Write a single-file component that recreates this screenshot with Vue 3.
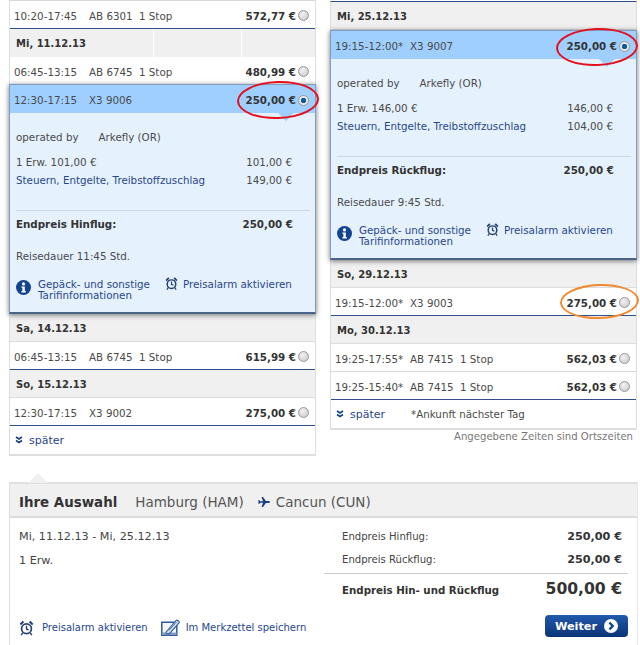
<script setup>
const outbound = [
  { type: 'flight', time: '10:20-17:45', no: 'AB 6301', stop: '1 Stop', price: '572,77 €', last: true },
  { type: 'day', label: 'Mi, 11.12.13', seams: true },
  { type: 'flight', time: '06:45-13:15', no: 'AB 6745', stop: '1 Stop', price: '480,99 €' },
  {
    type: 'detail', time: '12:30-17:15', no: 'X3 9006', price: '250,00 €', fare: '101,00 €', tax: '149,00 €',
    totalLabel: 'Endpreis Hinflug:', duration: 'Reisedauer 11:45 Std.'
  },
  { type: 'day', label: 'Sa, 14.12.13' },
  { type: 'flight', time: '06:45-13:15', no: 'AB 6745', stop: '1 Stop', price: '615,99 €', last: true },
  { type: 'day', label: 'So, 15.12.13' },
  { type: 'flight', time: '12:30-17:15', no: 'X3 9002', stop: '', price: '275,00 €', last: true }
]

const inbound = [
  { type: 'day', label: 'Mi, 25.12.13' },
  {
    type: 'detail', time: '19:15-12:00*', no: 'X3 9007', price: '250,00 €', fare: '146,00 €', tax: '104,00 €',
    totalLabel: 'Endpreis Rückflug:', duration: 'Reisedauer 9:45 Std.'
  },
  { type: 'day', label: 'So, 29.12.13' },
  { type: 'flight', time: '19:15-12:00*', no: 'X3 9003', stop: '', price: '275,00 €', last: true },
  { type: 'day', label: 'Mo, 30.12.13' },
  { type: 'flight', time: '19:25-17:55*', no: 'AB 7415', stop: '1 Stop', price: '562,03 €' },
  { type: 'flight', time: '19:25-15:40*', no: 'AB 7415', stop: '1 Stop', price: '562,03 €', last: true }
]

const columns = [
  { id: 'out', rows: outbound, note: '' },
  { id: 'in', rows: inbound, note: '*Ankunft nächster Tag' }
]
</script>

<template>
  <div class="page">
    <div class="columns">
      <div v-for="col in columns" :key="col.id" class="column" :class="col.id">
        <div class="list">
          <template v-for="(row, i) in col.rows" :key="i">
            <div v-if="row.type === 'day'" class="day" :class="{ seams: row.seams }">{{ row.label }}</div>

            <div v-else-if="row.type === 'flight'" class="flight" :class="{ last: row.last }">
              <span class="time">{{ row.time }}</span>
              <span class="no">{{ row.no }}</span>
              <span class="stop">{{ row.stop }}</span>
              <b class="price">{{ row.price }}</b>
              <i class="radio" />
            </div>

            <div v-else class="detail">
              <div class="flight head">
                <span class="time">{{ row.time }}</span>
                <span class="no">{{ row.no }}</span>
                <span class="stop" />
                <b class="price">{{ row.price }}</b>
                <i class="radio on" />
              </div>
              <i class="notch" />
              <div class="body">
                <div class="operated"><span>operated by</span><span>Arkefly (OR)</span></div>
                <div class="line"><span>1 Erw. {{ row.fare }}</span><span>{{ row.fare }}</span></div>
                <div class="line tax"><a>Steuern, Entgelte, Treibstoffzuschlag</a><span>{{ row.tax }}</span></div>
                <div class="line total"><b>{{ row.totalLabel }}</b><b>{{ row.price }}</b></div>
                <div class="duration">{{ row.duration }}</div>
                <div class="links">
                  <svg class="info" width="15" height="15" viewBox="0 0 16 16">
                    <circle cx="8" cy="8" r="8" fill="#12448f" />
                    <circle cx="8" cy="4.2" r="1.7" fill="#fff" />
                    <path d="M5.8 6.8h3.6v5h1v1.5H5.8v-1.5h1V8.3h-1z" fill="#fff" />
                  </svg>
                  <a class="baggage">Gepäck- und sonstige Tarifinformationen</a>
                  <svg class="alarm" width="13" height="15" viewBox="0 0 14 15">
                    <circle cx="7" cy="8.2" r="4.6" fill="none" stroke="#24406f" stroke-width="1.6" />
                    <path d="M7 5.4v3l2 1M3.4 12l-1.4 2.2M10.6 12l1.4 2.2" fill="none" stroke="#24406f" stroke-width="1.3" />
                    <path d="M.6 3.6L3.4.8l1.4 1.3L1.8 5zM13.4 3.6L10.6.8 9.2 2.1l3 2.9z" fill="#24406f" />
                  </svg>
                  <a>Preisalarm aktivieren</a>
                </div>
              </div>
            </div>
          </template>
          <div class="later">
            <svg width="8" height="8" viewBox="0 0 8 8">
              <path d="M1 1l3 2 3-2M1 4.5l3 2 3-2" fill="none" stroke="#163f85" stroke-width="1.6" />
            </svg>
            <a>später</a>
            <span v-if="col.note" class="note">{{ col.note }}</span>
          </div>
        </div>
        <div v-if="col.id === 'in'" class="local">Angegebene Zeiten sind Ortszeiten</div>
      </div>
    </div>

    <section class="choice">
      <i class="tip" />
      <header>
        <b>Ihre Auswahl</b>
        <span>Hamburg (HAM)</span>
        <svg width="12" height="10" viewBox="0 0 13 11">
          <path d="M0 3.6h1.4l1.2 1.2h2.8L3.8 0h1.6l3.2 4.4h2.6c1.1 0 1.8.5 1.8 1.1s-.7 1.1-1.8 1.1H8.6L5.4 11H3.8l1.6-4.8H2.6L1.4 7.4H0l.7-1.9z" fill="#17407f" />
        </svg>
        <span>Cancun (CUN)</span>
      </header>
      <div class="summary">
        <div class="trip">
          <div class="dates">Mi, 11.12.13 - Mi, 25.12.13</div>
          <div class="pax">1 Erw.</div>
          <div class="actions">
            <svg width="15" height="16" viewBox="0 0 14 15">
              <circle cx="7" cy="8.2" r="4.6" fill="none" stroke="#24406f" stroke-width="1.6" />
              <path d="M7 5.4v3l2 1M3.4 12l-1.4 2.2M10.6 12l1.4 2.2" fill="none" stroke="#24406f" stroke-width="1.3" />
              <path d="M.6 3.6L3.4.8l1.4 1.3L1.8 5zM13.4 3.6L10.6.8 9.2 2.1l3 2.9z" fill="#24406f" />
            </svg>
            <a>Preisalarm aktivieren</a>
            <svg class="memo" width="20" height="17" viewBox="0 0 20 17">
              <path d="M.8 3.2h15v13h-15z" fill="#f4f7fb" stroke="#2f5a99" stroke-width="1.5" />
              <path d="M1 13.5h14.5V16H1z" fill="#7f9cc6" />
              <path d="M5.5 12.5L15 1.5c1-1.1 4 1 3 2.4L9 14c-1 1-3 1-3.8.2-.5-.6-.3-1.2.3-1.7z" fill="#d7e1ee" stroke="#2f5a99" stroke-width="1.1" />
              <path d="M8 11.5L15.500 3" fill="none" stroke="#2f5a99" stroke-width=".8" />
            </svg>
            <a>Im Merkzettel speichern</a>
          </div>
        </div>
        <div class="prices">
          <div class="sum"><span>Endpreis Hinflug:</span><b>250,00 €</b></div>
          <div class="sum"><span>Endpreis Rückflug:</span><b>250,00 €</b></div>
          <div class="sum grand"><b>Endpreis Hin- und Rückflug</b><b class="big">500,00 €</b></div>
          <button class="next">
            Weiter
            <svg width="14" height="14" viewBox="0 0 14 14">
              <circle cx="7" cy="7" r="7" fill="#fff" />
              <path d="M5.4 3.6L8.8 7l-3.4 3.4" fill="none" stroke="#0f3f86" stroke-width="2.2" />
            </svg>
          </button>
        </div>
      </div>
    </section>

    <i class="mark red first-mark" />
    <i class="mark red second-mark" />
    <i class="mark orange third-mark" />
  </div>
</template>

<style scoped>
.page {
  position: relative;
  width: 640px;
  height: 645px;
  overflow: hidden;
  background: #fff;
  font-family: "DejaVu Sans", Verdana, sans-serif;
  font-size: 10.3px;
  color: #4a4a4a;
}

.columns {
  display: flex;
  gap: 14px;
  padding-left: 9px;
}

.column {
  width: 307px;
}

.list {
  border: 1px solid #dedede;
  border-width: 1px 1px 2px;
  border-top-color: #d8d8d8;
}

.column.in .list {
  margin-top: 1px;
  border-top: 1px solid #2e4f8a;
}

.day {
  height: 27px;
  line-height: 29px;
  padding-left: 6px;
  background: #f0f0f0;
  border-bottom: 1px solid #dcdcdc;
  font-size: 10px;
  font-weight: bold;
  color: #333;
}

.day.seams {
  background:
    linear-gradient(#fff, #fff) 143px 0 / 1px 100% no-repeat,
    linear-gradient(#fff, #fff) 231px 0 / 1px 100% no-repeat,
    #f0f0f0;
  border-bottom: 0;
  height: 28px;
}

.flight {
  display: flex;
  align-items: center;
  box-sizing: border-box;
  height: 28px;
  padding: 2px 0 0 4px;
  background: #fff;
  border-bottom: 1px solid #d8d8d8;
}

.flight.last {
  border-bottom: 1px solid #2e4f8a;
}

.time {
  width: 75px;
  white-space: nowrap;
}

.no {
  width: 50px;
}

.stop {
  flex: 1;
}

.price {
  font-weight: bold;
  color: #333;
  margin-right: 2px;
  white-space: nowrap;
}

.radio {
  width: 11px;
  height: 11px;
  margin-right: 6px;
  border-radius: 50%;
  box-sizing: border-box;
  border: 1px solid #999;
  background: radial-gradient(circle at 40% 35%, #f2f2f2, #c4c4c4);
}

.radio.on {
  background: radial-gradient(circle, #0d5f9c 0 2.4px, #e8e8e8 3px);
}

.detail {
  position: relative;
  z-index: 1;
  margin: 0 -1px;
  border: 1px solid #7f9dc0;
  border-bottom: 2px solid #4a6488;
  box-shadow: 0 1px 5px rgba(0, 0, 0, 0.55);
  background: #e6f1fe;
}

.column.out .detail {
  margin-top: -1px;
}

.flight.head {
  background: #9fcfff;
  border: 0;
  height: 28px;
}

.notch {
  position: absolute;
  right: 21px;
  top: 28px;
  width: 0;
  height: 0;
  border: 8px solid transparent;
  border-top-color: #9fcfff;
  border-bottom: 0;
}

.body {
  height: 199px;
  padding: 18px 22px 0 6px;
  box-sizing: border-box;
}

.operated {
  display: flex;
  gap: 20px;
  height: 25px;
  line-height: 12px;
}

.line {
  display: flex;
  justify-content: space-between;
  height: 18px;
  line-height: 12px;
}

.line span:last-child {
  margin-right: 1px;
}

.tax {
  height: 36px;
}

a {
  color: #27478c;
}

.total {
  margin-right: -17px;
  padding: 7px 17px 0 0;
  height: 32px;
  border-top: 1px solid #cfd6de;
  color: #333;
}

.duration {
  height: 19px;
  line-height: 12px;
}

.links {
  display: flex;
  align-items: flex-start;
  margin-top: 10px;
  line-height: 11px;
}

.info {
  flex: none;
  margin-top: 1px;
}

.baggage {
  width: 127px;
  margin-left: 7px;
}

.alarm {
  flex: none;
  margin: -3px 5px 0 0;
}

.later {
  display: flex;
  align-items: center;
  height: 28px;
  padding-left: 5px;
  background: #fff;
  font-size: 11px;
  position: relative;
}

.later a {
  margin-left: 6px;
}

.note {
  position: absolute;
  left: 80px;
  font-size: 10.3px;
}

.local {
  margin-top: 1px;
  padding-right: 4px;
  text-align: right;
  font-size: 10.1px;
  line-height: 12px;
  color: #777;
}

.choice {
  position: relative;
  box-sizing: border-box;
  height: 163px;
  margin: 26px 2px 0 9px;
  border-left: 1px solid #dedede;
  border-top: 2px solid #e0e0e0;
  border-right: 1px solid #e8e8e8;
}

.tip {
  position: absolute;
  left: 18px;
  top: -11px;
  width: 0;
  height: 0;
  border: 10px solid transparent;
  border-bottom-color: #f0f0f0;
  border-top: 0;
}

header {
  display: flex;
  align-items: center;
  box-sizing: border-box;
  height: 34px;
  padding: 4px 0 0 9px;
  background: #f0f0f0;
  border-bottom: 2px solid #dedede;
  font-size: 13.5px;
  color: #555;
}

header b {
  font-size: 13.4px;
  color: #333;
  margin-right: 18px;
}

header svg {
  margin: 0 6px 0 14px;
}

.summary {
  display: flex;
  color: #444;
}

.trip {
  flex: 1;
  padding: 12px 0 0 9px;
  font-size: 11.2px;
}

.pax {
  margin-top: 11px;
}

.actions {
  display: flex;
  align-items: center;
  margin-top: 52px;
  font-size: 10px;
}

.actions a {
  margin-left: 8px;
}

.memo {
  margin-left: 13px;
}

.actions .memo + a {
  margin-left: 5px;
}

.prices {
  width: 304px;
  margin-right: 9px;
  display: flex;
  flex-direction: column;
  align-items: stretch;
}

.sum {
  display: flex;
  align-items: center;
  justify-content: space-between;
  height: 23px;
  padding: 0 6px 0 18px;
  font-size: 10.1px;
}

.sum:first-child {
  margin-top: 7px;
}

.sum b {
  font-size: 11.2px;
  color: #333;
}

.sum.grand {
  height: 32px;
  margin-top: 2px;
  border-top: 1px solid #cfcfcf;
}

.grand b {
  font-size: 10.25px;
}

.grand .big {
  font-size: 15.6px;
  margin-top: -3px;
}

.next {
  align-self: flex-end;
  display: flex;
  align-items: center;
  justify-content: center;
  gap: 7px;
  width: 83px;
  height: 22px;
  margin-top: 9px;
  padding: 0;
  border: 0;
  border-radius: 4px;
  background: linear-gradient(#2159ab, #0b3478);
  color: #fff;
  font: bold 11.3px "DejaVu Sans", Verdana, sans-serif;
}

.mark {
  position: absolute;
  z-index: 2;
  box-sizing: border-box;
  border-radius: 50%;
  border: 2.5px solid;
  transform: rotate(-2deg);
}

.red {
  border-color: #e3101e;
}

.orange {
  border-color: #f28a30;
}

.first-mark {
  left: 237px;
  top: 81px;
  width: 82px;
  height: 38px;
}

.second-mark {
  left: 556px;
  top: 28px;
  width: 82px;
  height: 38px;
}

.third-mark {
  left: 560px;
  top: 284px;
  width: 79px;
  height: 35px;
}
</style>
